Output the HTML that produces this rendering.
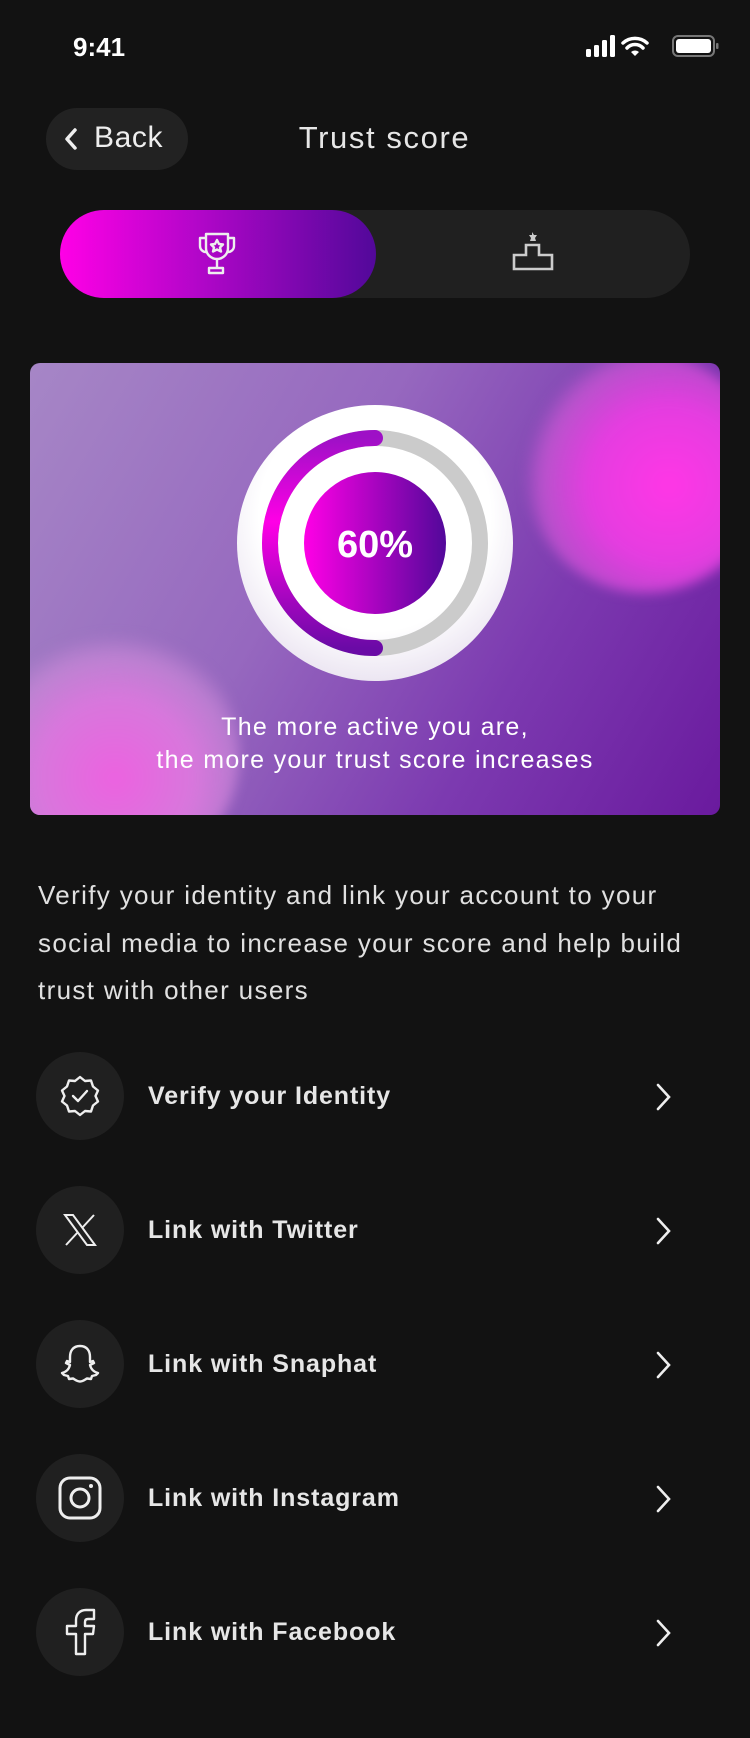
<!DOCTYPE html>
<html><head><meta charset="utf-8"><style>
*{margin:0;padding:0;box-sizing:border-box}
body{width:750px;height:1738px;background:#121212;font-family:"Liberation Sans",sans-serif;color:#e8e8e8;position:relative;overflow:hidden}
.abs{position:absolute}
.row{position:absolute;left:0;width:750px;height:88px}
.row .ic{position:absolute;left:36px;top:0;width:88px;height:88px;border-radius:50%;background:#202020;display:flex;align-items:center;justify-content:center}
.row .t{position:absolute;left:148px;top:0;line-height:88px;font-size:25px;font-weight:bold;color:#e6e6e6;letter-spacing:0.9px}
.row .ch{position:absolute;left:654px;top:30px}
</style></head><body>
<div class="abs" style="left:73px;top:32px;font-size:26px;font-weight:bold;color:#fff">9:41</div>
<svg class="abs" style="left:585px;top:34px" width="136" height="26" viewBox="0 0 136 26">
<rect x="1" y="15" width="5" height="8" rx="1.5" fill="#fff"/><rect x="9" y="11" width="5" height="12" rx="1.5" fill="#fff"/><rect x="17" y="6" width="5" height="17" rx="1.5" fill="#fff"/><rect x="25" y="1" width="5" height="22" rx="1.5" fill="#fff"/>
<path d="M38 9a18 18 0 0 1 24 0M42 14a11 11 0 0 1 16 0" stroke="#fff" stroke-width="3.5" fill="none" stroke-linecap="round"/><path d="M46 18l4 4 4-4a6 6 0 0 0-8 0z" fill="#fff"/>
<rect x="88" y="2" width="41" height="20" rx="5" stroke="#777" stroke-width="2" fill="none"/><rect x="91" y="5" width="35" height="14" rx="3" fill="#fff"/><rect x="131" y="9" width="2.5" height="6" rx="1" fill="#777"/>
</svg>
<div class="abs" style="left:46px;top:108px;width:142px;height:62px;border-radius:31px;background:#222"></div>
<svg class="abs" style="left:63px;top:127px" width="16" height="24"><path d="M12 3L4 12l8 9" stroke="#eee" stroke-width="3.5" fill="none" stroke-linecap="round" stroke-linejoin="round"/></svg>
<div class="abs" style="left:94px;top:121px;font-size:30px;color:#eee;letter-spacing:0.6px">Back</div>
<div class="abs" style="left:0;width:769px;text-align:center;top:120px;font-size:31px;color:#e6e6e6;letter-spacing:1.6px">Trust score</div>
<div class="abs" style="left:60px;top:210px;width:630px;height:88px;border-radius:44px;background:#202020"></div>
<div class="abs" style="left:60px;top:210px;width:316px;height:88px;border-radius:44px;background:linear-gradient(90deg,#ff00e6 0%,#b006c8 45%,#52089a 100%)"></div>
<svg class="abs" style="left:194px;top:230px" width="46" height="48" viewBox="0 0 46 48" fill="none" stroke="#eee" stroke-width="2.4" stroke-linejoin="round">
<path d="M12 4h22v14a11 11 0 0 1-22 0z"/><path d="M12 8H6v8a6 6 0 0 0 6 6M34 8h6v8a6 6 0 0 1-6 6"/><path d="M23 29v9M17 38h12v5H15v-5z"/><path d="M23 10l2 4 4 .5-3 3 1 4-4-2-4 2 1-4-3-3 4-.5z"/></svg>
<svg class="abs" style="left:512px;top:229px" width="44" height="42" viewBox="0 0 44 42" fill="none" stroke="#ccc" stroke-width="2.6">
<path d="M2 40V26h12V16h13v10h13v14z"/><path d="M20 3l2 3h3l-2 3 1 3h-6l1-3-2-3h3z" fill="#ccc" stroke="none"/></svg>
<div class="abs" style="left:30px;top:363px;width:690px;height:452px;border-radius:10px;overflow:hidden;background:linear-gradient(120deg,#a686c6 0%,#9668bf 40%,#7c3ab0 70%,#6a1a9e 100%)">
<div class="abs" style="left:495px;top:-10px;width:240px;height:240px;border-radius:50%;background:radial-gradient(circle at 60% 55%,#ff36e6 0%,#e53de0 40%,rgba(220,90,220,0.6) 65%,rgba(200,120,220,0) 75%);filter:blur(6px)"></div>
<div class="abs" style="left:-40px;top:265px;width:250px;height:250px;border-radius:50%;background:radial-gradient(circle at 50% 60%,#ec62e0 0%,#d877dc 40%,rgba(210,140,220,0.6) 62%,rgba(200,150,220,0) 74%);filter:blur(6px)"></div>
</div>
<svg class="abs" style="left:230px;top:398px" width="290" height="290" viewBox="0 0 290 290">
<defs><linearGradient id="g1" x1="0" y1="0" x2="0" y2="1"><stop offset="0" stop-color="#9e10c6"/><stop offset=".4" stop-color="#ff00e6"/><stop offset="1" stop-color="#6a0aa6"/></linearGradient>
<linearGradient id="g2" x1="0" y1="0" x2="1" y2="0"><stop offset="0" stop-color="#ff00e6"/><stop offset="1" stop-color="#52089a"/></linearGradient>
<radialGradient id="w" cx=".5" cy=".4" r=".6"><stop offset=".7" stop-color="#fff"/><stop offset="1" stop-color="#ece6f2"/></radialGradient></defs>
<circle cx="145" cy="145" r="138" fill="url(#w)"/>
<circle cx="145" cy="145" r="105" fill="none" stroke="#cbcbcb" stroke-width="16"/>
<path d="M145 40A105 105 0 0 0 145 250" fill="none" stroke="url(#g1)" stroke-width="16" stroke-linecap="round"/>
<circle cx="145" cy="145" r="71" fill="url(#g2)"/>
<text x="145" y="159" text-anchor="middle" font-family="Liberation Sans" font-weight="bold" font-size="38" fill="#fff">60%</text>
</svg>
<div class="abs" style="left:0;width:750px;text-align:center;top:711px;font-size:25px;line-height:33px;color:#fff;letter-spacing:1.3px">The more active you are,<br>the more your trust score increases</div>
<div class="abs" style="left:38px;top:872px;width:712px;font-size:26px;line-height:47.5px;color:#e0e0e0;letter-spacing:1.35px;white-space:nowrap">Verify your identity and link your account to your<br>social media to increase your score and help build<br>trust with other users</div>

<div class="row" style="top:1052px"><div class="ic"><svg width="44" height="44" viewBox="0 0 44 44" fill="none" stroke="#eee" stroke-width="2.4" stroke-linejoin="round" stroke-linecap="round"><path d="M22 3l5 4 6-.5 2 6 5 4-2.5 5.5 2.5 5.5-5 4-2 6-6-.5-5 4-5-4-6 .5-2-6-5-4 2.5-5.5L4 16.5l5-4 2-6 6 .5z"/><path d="M15 22l5 5 9-10"/></svg></div><div class="t">Verify your Identity</div><svg class="ch" width="20" height="30"><path d="M4 3l11 12L4 27" stroke="#eee" stroke-width="2.6" fill="none" stroke-linecap="round"/></svg></div>

<div class="row" style="top:1186px"><div class="ic"><svg width="34" height="32" viewBox="0 0 34 32" fill="none" stroke="#eee" stroke-width="2"><path d="M2 1h8l22 30h-8z"/><path d="M31 1L19 14M15 18L3 31"/></svg></div><div class="t">Link with Twitter</div><svg class="ch" width="20" height="30"><path d="M4 3l11 12L4 27" stroke="#eee" stroke-width="2.6" fill="none" stroke-linecap="round"/></svg></div>

<div class="row" style="top:1320px"><div class="ic"><svg width="42" height="42" viewBox="0 0 42 42" fill="none" stroke="#eee" stroke-width="2.4" stroke-linejoin="round"><path d="M21 3c7 0 10 5 10 11v5l3-1 1 2-4 2c1 4 4 7 8 8l-2 2-4 1-1 3-4-.5c-2 1-4 3-7 3s-5-2-7-3l-4 .5-1-3-4-1-2-2c4-1 7-4 8-8l-4-2 1-2 3 1v-5c0-6 3-11 10-11z"/></svg></div><div class="t">Link with Snaphat</div><svg class="ch" width="20" height="30"><path d="M4 3l11 12L4 27" stroke="#eee" stroke-width="2.6" fill="none" stroke-linecap="round"/></svg></div>

<div class="row" style="top:1454px"><div class="ic"><svg width="46" height="46" viewBox="0 0 46 46" fill="none" stroke="#eee" stroke-width="3"><rect x="3" y="3" width="40" height="40" rx="10"/><circle cx="23" cy="23" r="9"/><circle cx="34" cy="11" r="2" fill="#eee" stroke="none"/></svg></div><div class="t">Link with Instagram</div><svg class="ch" width="20" height="30"><path d="M4 3l11 12L4 27" stroke="#eee" stroke-width="2.6" fill="none" stroke-linecap="round"/></svg></div>

<div class="row" style="top:1588px"><div class="ic"><svg width="34" height="48" viewBox="0 0 34 48" fill="none" stroke="#eee" stroke-width="2.4" stroke-linejoin="round"><path d="M13 46V26H4v-8h9v-6c0-6 4-10 10-10h8v9h-6c-2 0-3 1-3 3v4h9l-1 8h-8v20z"/></svg></div><div class="t">Link with Facebook</div><svg class="ch" width="20" height="30"><path d="M4 3l11 12L4 27" stroke="#eee" stroke-width="2.6" fill="none" stroke-linecap="round"/></svg></div>
</body></html>
